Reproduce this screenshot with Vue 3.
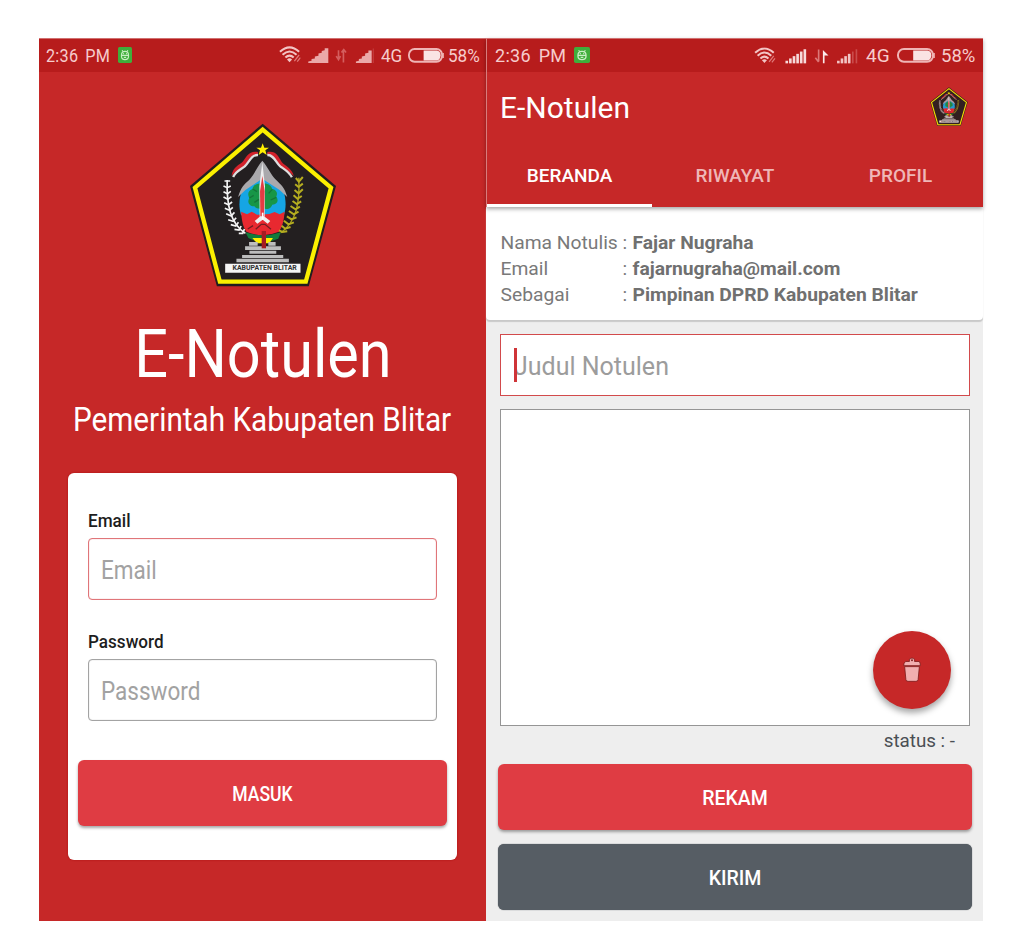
<script setup>
const signalBars = [0, 1, 2, 3, 4, 5]
const profile = [
  { label: 'Nama Notulis', value: 'Fajar Nugraha' },
  { label: 'Email', value: 'fajarnugraha@mail.com' },
  { label: 'Sebagai', value: 'Pimpinan DPRD Kabupaten Blitar' },
]
const tabs = ['BERANDA', 'RIWAYAT', 'PROFIL']
</script>

<template>
  <svg class="defs" aria-hidden="true">
    <symbol id="emblem" viewBox="25 25 446 492" preserveAspectRatio="none">
      <path d="M247 27 L468 214 L386 515 H109 L28 214 Z" fill="#211e1f" />
      <path d="M247 45 L453 219 L377 501 H118 L43 219 Z" fill="#231f20" stroke="#fbf000" stroke-width="13" />
      <!-- ribbons and star -->
      <path d="M233 112 C205 107 200 125 186 142 C178 151 158 154 153 184 C170 164 185 164 197 148 C207 132 214 117 232 121 Z" fill="#d3222b" />
      <path d="M233 121 C212 120 207 142 193 155 C182 164 166 169 158 187" fill="none" stroke="#dedede" stroke-width="7" />
      <path d="M261 112 C287 107 293 124 304 141 C312 153 335 158 341 185 C323 164 308 165 296 149 C285 133 278 120 261 121 Z" fill="#d3222b" />
      <path d="M261 121 C281 120 286 143 300 155 C311 163 327 171 335 188" fill="none" stroke="#dedede" stroke-width="7" />
      <path d="M247 86 L252 99 L266 99 L255 107 L259 121 L247 113 L235 121 L239 107 L228 99 L242 99 Z" fill="#fff000" />
      <!-- shield -->
      <path d="M246 182 L185 226 C176 250 174 275 182 302 H311 C319 277 317 251 309 226 Z" fill="#16a5e4" />
      <path d="M246 207 C229 204 219 212 216 223 C202 228 201 242 207 250 C199 262 207 276 222 275 C230 286 248 281 248 281 C265 288 273 278 276 270 C292 270 296 257 288 246 C294 234 287 225 276 223 C272 211 260 204 246 207 Z" fill="#179647" />
      <path d="M246 138 C230 155 222 181 207 195 C191 209 181 218 173 247 L195 226 L246 192 L298 226 L321 247 C313 217 302 210 287 195 C271 180 262 155 246 138 Z" fill="#aaa9ac" />
      <path d="M207 250 L220 242 M222 263 L236 254 M276 224 L265 236 M288 248 L271 256 M217 223 L230 231" stroke="#14763a" stroke-width="4" />
      <path d="M182 291 L200 299 L214 291 L230 300 L267 298 L283 292 L298 299 L313 291 C311 320 306 336 296 351 Q246 372 198 351 C188 336 184 320 182 291 Z" fill="#e82930" />
      <path d="M246 143 L254 215 L253 306 L270 319 L262 327 L247 315 L231 327 L223 319 L238 306 L237 215 Z" fill="#eeeeee" />
      <path d="M246 184 L253 229 L251 305 H240 L239 230 Z" fill="#e43c43" />
      <path d="M247 294 V315" stroke="#ffffff" stroke-width="5" />
      <path d="M226 344 L243 329 H254 L272 344 M218 333 L202 343" fill="none" stroke="#721d22" stroke-width="4" />
      <path d="M195 353 Q247 371 302 353 L294 372 Q247 393 204 370 Z" fill="#117c3b" />
      <path d="M216 370 H278 L267 386 H230 Z" fill="#fff000" />
      <!-- cotton branch -->
      <path d="M140 196 C138 270 149 326 195 356" fill="none" stroke="#f4f4f4" stroke-width="5" />
      <path d="M132 199 H149 M129 214 L140 219 L151 214 M129 231 L141 237 L151 230 M129 247 L142 254 L153 246 M131 264 L144 270 L155 262 M133 281 L147 287 L157 278 M137 297 L152 304 L162 293 M143 315 L158 320 L167 309 M151 330 L166 334 L174 323 M162 344 L176 346 L182 334 M175 356 L187 356 L192 343" fill="none" stroke="#f4f4f4" stroke-width="5" />
      <!-- rice branch -->
      <path d="M356 189 C359 267 349 320 302 354" fill="none" stroke="#a9a31d" stroke-width="4" />
      <path d="M347 190 L356 201 L368 187 M345 209 L355 217 L368 207 M343 226 L355 236 L368 224 M340 242 L352 252 L365 244 M337 259 L350 268 L363 260 M331 274 L346 284 L359 276 M326 289 L341 299 L355 291 M320 305 L334 314 L349 308 M311 318 L325 329 L341 323 M304 333 L315 342 L331 337 M296 347 L307 352 L321 350" fill="none" stroke="#b5ad20" stroke-width="6" />
      <!-- pedestal -->
      <path d="M206 382 H232 V393 H206 Z M264 382 H286 V393 H264 Z M194 395 H302 V406 H194 Z M207 408 H288 V417 H207 Z M185 421 H309 V430 H185 Z M168 432 H326 V443 H168 Z" fill="#bdbdbd" />
      <path d="M244 349 H257 V401 H244 Z" fill="#a41d23" />
      <path d="M134 447 H361 V474 H134 Z" fill="#f5f5f5" />
    </symbol>
    <symbol id="wifi" viewBox="0 0 68 54">
      <g fill="none" stroke="currentColor" stroke-width="6.500">
        <path d="M3 18 Q33 -10 63 18" />
        <path d="M11 27 Q33 7 55 27" />
        <path d="M20 36 Q33 24 46 36" />
      </g>
      <path d="M25 42 Q33 35 41 42 L33 51 Z" fill="currentColor" />
      <path d="M48 47 L63 28 M57 49 L67 36" stroke="#df7878" stroke-width="4" />
    </symbol>
    <symbol id="droid" viewBox="0 0 48 48" preserveAspectRatio="none">
      <rect width="48" height="48" rx="5" fill="#3fae3b" />
      <path d="M14 9 L18 15 M34 9 L30 15" stroke="#c8edc2" stroke-width="3" />
      <path d="M12 24 Q12 13 24 13 Q36 13 36 24 V28 Q36 38 24 38 Q12 38 12 28 Z M12 25 H36 M20 31 H28" fill="none" stroke="#c8edc2" stroke-width="4" />
      <circle cx="19" cy="20" r="2" fill="#c8edc2" />
      <circle cx="29" cy="20" r="2" fill="#c8edc2" />
    </symbol>
  </svg>

  <main class="board">
    <section class="phone login">
      <header class="status">
        <span class="narrow time">2:36 PM</span>
        <svg class="droid"><use href="#droid" /></svg>
        <svg class="radio" viewBox="50 35 300 70">
          <use href="#wifi" x="54" y="44" width="66" height="53" />
          <path d="M143 96 V91 L153 89 V84 L163 82 V76 L174 74 V67 L184 65 V59 L193 57 V51 H204 V96 Z" fill="#eba9a9" />
          <path d="M235 57 V86 M228 75 L235 86 L241 75 M250 94 V55 M244 64 L251 55 L258 64" fill="none" stroke="#d45e5e" stroke-width="5" />
          <path d="M288 96 V91 L297 89 V84 L306 82 V76 L316 74 V67 L326 65 V58 H336 V96 Z" fill="#eba9a9" />
          <path d="M341 52 V96" stroke="#c43939" stroke-width="4" />
        </svg>
        <span class="narrow">4G</span>
        <svg class="battery" viewBox="0 0 115 46" preserveAspectRatio="none">
          <rect x="3" y="3" width="106" height="39" rx="18" fill="none" stroke="#efb5b5" stroke-width="6" />
          <path d="M50 8 H92 Q104 10 104 22 Q104 36 92 38 H50 Z" fill="#fae3e3" />
          <path d="M112 15 V31" stroke="#efb5b5" stroke-width="5" />
        </svg>
        <span class="narrow">58%</span>
      </header>

      <div class="hero">
        <svg class="crest" viewBox="25 25 446 492" preserveAspectRatio="none">
          <use href="#emblem" x="25" y="25" width="446" height="492" />
          <text x="156" y="467" class="banner" textLength="194" lengthAdjust="spacingAndGlyphs">KABUPATEN BLITAR</text>
        </svg>
        <h1><span class="narrow">E-Notulen</span></h1>
        <p><span class="narrow">Pemerintah Kabupaten Blitar</span></p>
      </div>

      <form class="card" @submit.prevent>
        <div class="field">
          <label><span class="narrow">Email</span></label>
          <div class="box focus"><span class="narrow">Email</span></div>
        </div>
        <div class="field">
          <label><span class="narrow">Password</span></label>
          <div class="box"><span class="narrow">Password</span></div>
        </div>
        <button class="btn primary"><span class="narrow">MASUK</span></button>
      </form>
    </section>

    <section class="phone home">
      <div class="top">
        <header class="status">
          <span class="time">2:36 PM</span>
          <svg class="droid"><use href="#droid" /></svg>
          <svg class="radio" viewBox="35 35 325 70">
            <use href="#wifi" x="40" y="48" width="70" height="51" />
            <path
              v-for="i in signalBars"
              :key="i"
              :d="`M${142 + i * 11} 97 V${89 - i * 7}`"
              stroke="#f7dada"
              stroke-width="8"
            />
            <path d="M239 55 V91 M229 80 L239 93" fill="none" stroke="#dc7878" stroke-width="5" />
            <path d="M252 97 V56 L269 73 H257 V97 Z" fill="#fbe9e9" />
            <path
              v-for="i in signalBars"
              :key="'b' + i"
              :d="`M${299 + i * 11} 97 V${89 - i * 7}`"
              :stroke="i < 4 ? '#f2c4c4' : '#ca4c4c'"
              :stroke-width="i < 4 ? 8 : 5"
            />
          </svg>
          <span>4G</span>
          <svg class="battery" viewBox="0 0 115 46" preserveAspectRatio="none">
            <rect x="3" y="3" width="106" height="39" rx="18" fill="none" stroke="#efb5b5" stroke-width="6" />
            <path d="M49 8 H92 Q104 10 104 22 Q104 36 92 38 H49 Z" fill="#fae3e3" />
            <path d="M112 15 V31" stroke="#efb5b5" stroke-width="5" />
          </svg>
          <span>58%</span>
        </header>
        <div class="appbar">
          <h2>E-Notulen</h2>
          <svg class="crest-small" viewBox="25 25 446 492" preserveAspectRatio="none">
            <use href="#emblem" x="25" y="25" width="446" height="492" />
            <text x="156" y="467" class="banner" textLength="194" lengthAdjust="spacingAndGlyphs">KABUPATEN BLITAR</text>
          </svg>
        </div>
        <nav class="tabs">
          <span v-for="(tab, i) in tabs" :key="tab" class="tab" :class="{ active: i === 0 }">{{ tab }}</span>
        </nav>
      </div>

      <div class="profile">
        <div v-for="row in profile" :key="row.label" class="row">
          <span class="key">{{ row.label }}</span>
          <span class="colon">:</span>
          <b>{{ row.value }}</b>
        </div>
      </div>

      <div class="editor">
        <div class="title-input"><i class="caret"></i><span>Judul Notulen</span></div>
        <div class="note">
          <button class="fab">
            <svg viewBox="0 0 56 78">
              <path d="M20 7 Q28 -1 36 7 V14 H51 Q54 19 54 27 H2 Q2 18 8 14 H20 Z" fill="#f1afb0" stroke="#7c1c1c" stroke-width="2.500" />
              <circle cx="28" cy="10" r="3" fill="#7c1c1c" />
              <path d="M5 30 H51 L47 71 Q46 76 40 76 H16 Q10 76 9 71 Z" fill="#f1afb0" stroke="#7c1c1c" stroke-width="2.500" />
            </svg>
          </button>
        </div>
        <div class="state">status : -</div>
        <button class="btn primary">REKAM</button>
        <button class="btn slate">KIRIM</button>
      </div>
    </section>
  </main>
</template>

<style>
body {
  background: #ffffff;
}
</style>

<style scoped>
.defs {
  position: absolute;
  width: 0;
  height: 0;
}
.board {
  box-sizing: border-box;
  height: 949px;
  padding: 38px 0 0 39px;
  display: flex;
  align-items: flex-start;
  font-family: Roboto, sans-serif;
}
.board * {
  box-sizing: border-box;
}
.board svg {
  display: block;
}
.phone {
  height: 883px;
}
.narrow {
  display: inline-block;
  transform: scaleX(0.9);
  transform-origin: left center;
}
.login {
  width: 447px;
  background: #c62828;
}
.home {
  width: 497px;
  background: #eeeeee;
}
.status {
  display: grid;
  align-items: center;
  height: 34px;
  padding-top: 1px;
  background: #b71c1c;
  box-shadow: inset 0 1px 0 #d07070;
  color: #f6cccc;
  font-size: 19px;
  line-height: 24px;
  white-space: nowrap;
}
.login .status {
  grid-template-columns: 72px 159px 104px 27.500px 40px 1fr;
  padding-left: 6.500px;
}
.home .status {
  grid-template-columns: 79px 177px 115px 31px 44px 1fr;
  padding-left: 8px;
}
.home .status > span:last-child {
  font-size: 18.500px;
}
.time {
  font-size: 18px;
  letter-spacing: 0.300px;
  word-spacing: 3px;
}
.droid {
  width: 14px;
  height: 16px;
  margin-top: -1px;
}
.home .droid {
  width: 16px;
}
.radio {
  width: 100px;
  height: 23px;
  margin-top: -3px;
  color: #f3c5c5;
}
.home .radio {
  width: 108px;
}
.battery {
  width: 36px;
  height: 15px;
  margin-top: -1px;
}
.home .battery {
  width: 38px;
}
.hero {
  display: flex;
  flex-direction: column;
  align-items: center;
  padding-top: 51px;
  color: #ffffff;
}
.hero .narrow,
.btn .narrow {
  transform-origin: center;
}
.crest {
  width: 148px;
  height: 164px;
}
.banner {
  font-family: Roboto, sans-serif;
  font-size: 19px;
  font-weight: 700;
  fill: #333333;
}
.hero h1 {
  margin: 29px 0 0;
  font-weight: 400;
  font-size: 66px;
  line-height: 78px;
  white-space: nowrap;
}
.hero p {
  margin: 6px 0 0;
  font-size: 33px;
  line-height: 40px;
  white-space: nowrap;
}
.card {
  width: 389px;
  height: 387px;
  margin: 33px 0 0 29px;
  padding: 35px 10px 0;
  border-radius: 6px;
  background: #ffffff;
  box-shadow: 0 0 2px #a80f0f;
}
.field {
  padding: 0 10px;
  margin-bottom: 22px;
}
.field label {
  display: block;
  height: 30px;
  padding-top: 1px;
  font-size: 19px;
  font-weight: 500;
  line-height: 24px;
  color: #1d1d1d;
}
.box {
  height: 62px;
  padding: 2px 0 0 12px;
  border: 1.500px solid #a3a3a3;
  box-shadow: inset 0 0 1px #a3a3a3;
  border-radius: 4px;
  font-size: 25px;
  line-height: 60px;
  color: #a2a2a2;
}
.box.focus {
  border-color: #e07579;
  box-shadow: inset 0 0 1px #e07579;
}
.field + .field {
  margin-top: 29px;
  margin-bottom: 39px;
}
.btn {
  display: block;
  width: 100%;
  height: 66px;
  padding: 4px 0 0;
  border: 0;
  border-radius: 6px;
  font: 500 19.500px/24px Roboto, sans-serif;
  color: #ffffff;
  box-shadow: 0 2px 3px rgba(0, 0, 0, 0.35);
}
.primary {
  background: #df3c43;
}
.slate {
  background: #565d64;
}
.top {
  position: relative;
  height: 169px;
  background: #c62828;
  border-left: 1px solid #d87c7c;
  box-shadow: 0 2px 4px rgba(0, 0, 0, 0.35);
}
.appbar {
  display: flex;
  justify-content: space-between;
  align-items: center;
  height: 69px;
  padding: 0 15px 0 13px;
}
.appbar h2 {
  margin: 3px 0 0;
  font-weight: 400;
  font-size: 30px;
  line-height: 36px;
  color: #ffffff;
}
.crest-small {
  width: 38px;
  height: 39px;
  opacity: 0.9;
}
.tabs {
  display: grid;
  grid-template-columns: 165px 1fr 165px;
  height: 66px;
}
.tab {
  padding-top: 22px;
  text-align: center;
  font-size: 19px;
  font-weight: 500;
  line-height: 26px;
  color: #efb7b7;
}
.tab.active {
  border-bottom: 3px solid #ffffff;
  color: #ffffff;
}
.profile {
  height: 113px;
  padding: 23px 0 0 14.500px;
  background: #ffffff;
  border-radius: 0 0 4px 4px;
  box-shadow: 0 2px 1px #c9c9c9;
}
.row {
  display: grid;
  grid-template-columns: 122px 10px 1fr;
  height: 26.200px;
  font-size: 19.250px;
  line-height: 26px;
  color: #797979;
  white-space: nowrap;
}
.row b {
  font-weight: 700;
  color: #707070;
}
.editor {
  padding: 14px 11px 0 12px;
}
.title-input {
  position: relative;
  width: 470px;
  height: 62px;
  margin-left: 2px;
  padding: 1px 0 0 13px;
  border: 1.500px solid #d24a4c;
  background: #ffffff;
  font-size: 25px;
  line-height: 62px;
  color: #9c9c9c;
}
.caret {
  position: absolute;
  left: 13px;
  top: 13px;
  width: 2.500px;
  height: 34px;
  background: #cf3438;
}
.note {
  position: relative;
  width: 470px;
  height: 317px;
  margin: 13px 0 0 2px;
  border: 1.500px solid #959595;
  background: #ffffff;
}
.fab {
  position: absolute;
  right: 18px;
  bottom: 16px;
  display: grid;
  place-items: center;
  width: 78px;
  height: 78px;
  padding: 0 0 2px;
  border: 0;
  border-radius: 50%;
  background: #c62828;
  box-shadow: 0 4px 6px rgba(0, 0, 0, 0.35);
}
.fab svg {
  width: 18px;
  height: 25px;
}
.state {
  height: 38px;
  padding: 3px 17px 0 0;
  text-align: right;
  font-size: 18.800px;
  line-height: 24px;
  color: #4a4f54;
}
.slate {
  margin-top: 14px;
  box-shadow: 0 0 1px #3b4248;
}
</style>
